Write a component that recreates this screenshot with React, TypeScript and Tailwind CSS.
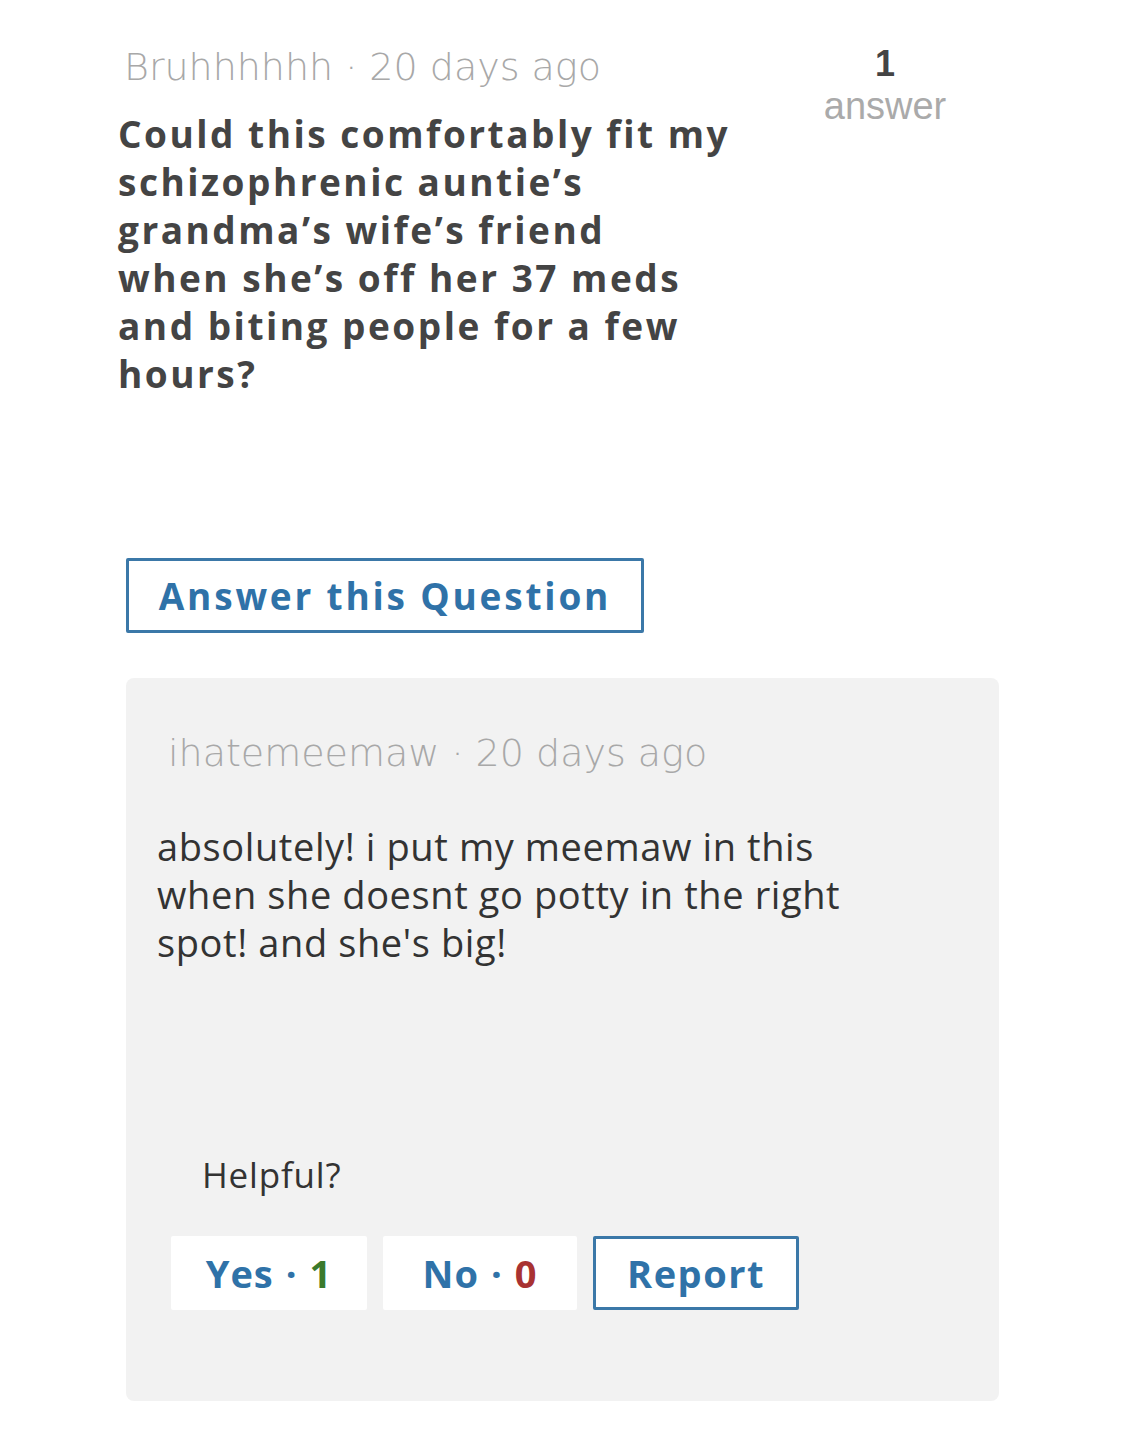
export default function App() {
  const os = { fontFamily: '"Open Sans", "Liberation Sans", sans-serif' };
  const dj = { fontFamily: '"DejaVu Sans", "Open Sans", sans-serif' };
  return (
    <div className="w-[1125px] h-[1440px] bg-white" style={os}>
      <div className="flex pl-[118px] pt-[44px]">
        <div className="w-[680px]">
          <div className="pl-[6px] text-[38px] leading-[46px] text-[#a8a8a8] font-extralight" style={dj}>
            Bruhhhhhh · 20 days ago
          </div>
          <div className="mt-[20px] text-[37px] leading-[48px] font-bold text-[#444] tracking-[2.5px]">
            Could this comfortably fit my<br />schizophrenic auntie’s<br />grandma’s wife’s friend<br />when she’s off her 37 meds<br />and biting people for a few<br />hours?
          </div>
        </div>
        <div className="ml-[24px] flex flex-col items-center w-[126px]" style={{ fontFamily: '"Liberation Sans", Arial, sans-serif' }}>
          <div className="text-[36px] leading-[40px] font-bold text-[#444]">1</div>
          <div className="text-[38px] leading-[44px] text-[#aaa]">answer</div>
        </div>
      </div>
      <div className="pl-[126px] mt-[160px]">
        <div className="w-[518px] h-[75px] border-[3px] border-[#3b78a8] rounded-[2px] flex items-center justify-center text-[37px] font-bold text-[#2f72a8] tracking-[2.8px]">
          Answer this Question
        </div>
      </div>
      <div className="ml-[126px] mt-[45px] w-[873px] h-[723px] bg-[#f2f2f2] rounded-[8px] pt-[52px]">
        <div className="pl-[42px] text-[38px] leading-[46px] text-[#a8a8a8] font-extralight" style={dj}>
          ihatemeemaw · 20 days ago
        </div>
        <div className="pl-[31px] mt-[46px] text-[38px] leading-[48px] text-[#333] tracking-[0.6px]">
          absolutely! i put my meemaw in this<br />when she doesnt go potty in the right<br />spot! and she's big!
        </div>
        <div className="pl-[76px] mt-[189px] text-[35px] leading-[40px] text-[#333] tracking-[0.8px]">Helpful?</div>
        <div className="pl-[45px] mt-[41px] flex gap-[16px] text-[38px] font-bold">
          <div className="w-[196px] h-[74px] bg-white rounded-[2px] flex items-center justify-center text-[#2f72a8] tracking-[1px]">
            Yes<span className="mx-[12px]">·</span><span className="text-[#3b7a2c]">1</span>
          </div>
          <div className="w-[194px] h-[74px] bg-white rounded-[2px] flex items-center justify-center text-[#2f72a8] tracking-[1px]">
            No<span className="mx-[12px]">·</span><span className="text-[#a83232]">0</span>
          </div>
          <div className="w-[206px] h-[74px] bg-white border-[3px] border-[#3b78a8] rounded-[2px] flex items-center justify-center text-[#2f72a8] tracking-[1.5px]">
            Report
          </div>
        </div>
      </div>
    </div>
  );
}
